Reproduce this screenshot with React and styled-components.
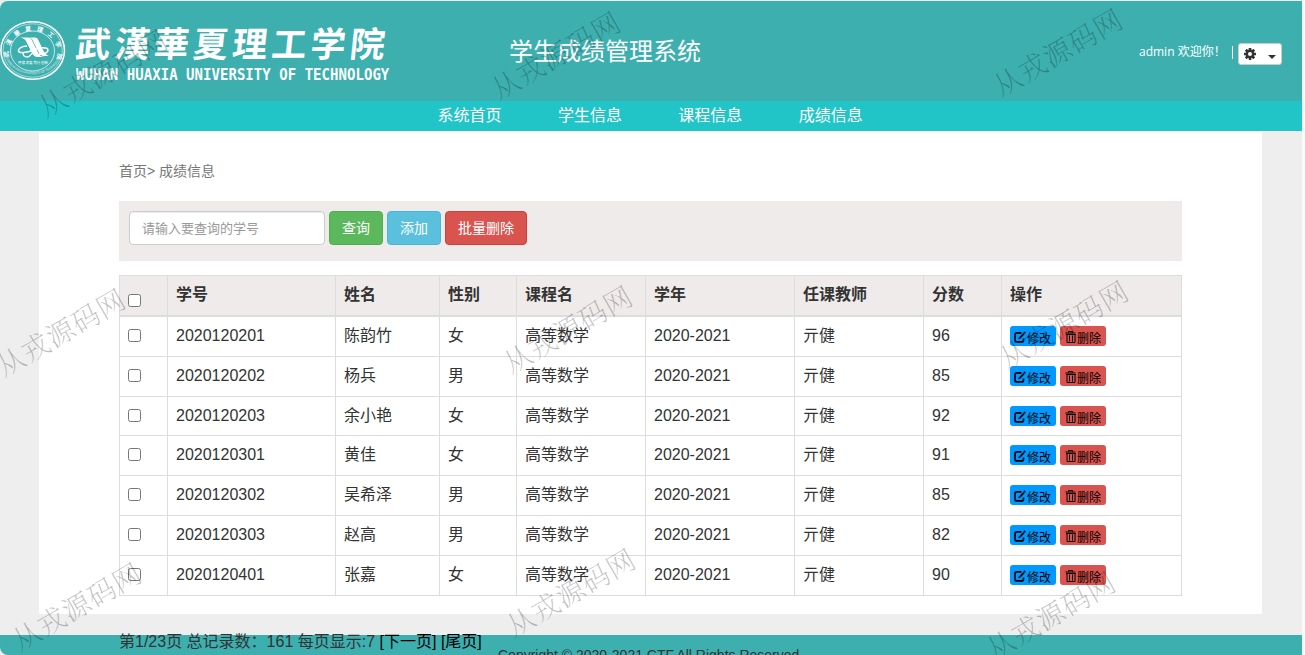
import React from "react";
import styled, { createGlobalStyle } from "styled-components";

const GlobalStyle = createGlobalStyle`
  * { box-sizing: border-box; }
  body {
    margin: 0;
    overflow: hidden;
    background: #fafafa;
    color: #333;
    font: 16px/22px "Liberation Sans", "Noto Sans CJK SC", sans-serif;
  }
`;

const Page = styled.div`
  position: relative;
  width: 1302px;
  height: 655px;
  padding-top: 1px;
  overflow: hidden;
  background: #eee;
`;

const Header = styled.header`
  display: grid;
  grid-template-columns: 509px 1fr auto;
  height: 100px;
  padding-right: 20px;
  border-top-left-radius: 8px;
  background: #3dafaf;
  color: #fff;
`;

const Brand = styled.div`
  display: flex;
  padding-top: 19px;
`;

const BrandNames = styled.div`
  display: flex;
  flex-direction: column;
  padding-left: 10px;
`;

const BrandName = styled.div`
  width: 315px;
  height: 50px;
  margin-top: -3px;
  font: 700 35px/50px "Noto Sans CJK SC", sans-serif;
  letter-spacing: 4.2px;
  white-space: nowrap;
  transform: skewX(-6deg);
`;

const BrandLatin = styled.div`
  font: 700 14px/16px "DejaVu Sans Mono", monospace;
  letter-spacing: 0.04px;
  white-space: nowrap;
  transform: scaleY(1.1);
`;

const Title = styled.h1`
  margin: 0;
  font: 400 24px/98px "Noto Sans CJK SC", sans-serif;
`;

const UserBox = styled.div`
  display: flex;
  align-items: center;
  height: 22px;
  margin-top: 42px;
  font: 12px/18px "Open Sans", "Noto Sans CJK SC", sans-serif;
`;

const Greeting = styled.span`
  width: 91px;
  padding-bottom: 4px;
  white-space: nowrap;
`;

const Divider = styled.span`
  width: 1px;
  height: 13px;
  margin: -4px 5px 0 2px;
  background: #fff;
`;

const SettingsButton = styled.button`
  display: flex;
  align-items: center;
  justify-content: space-between;
  width: 44px;
  height: 22px;
  padding: 0 5px;
  border: 1px solid #ccc;
  border-radius: 3px;
  background: #fff;
  color: #333;
`;

const Caret = styled.span`
  margin-top: 5px;
  border-top: 4px solid #333;
  border-left: 4px solid transparent;
  border-right: 4px solid transparent;
`;

const Nav = styled.nav`
  display: flex;
  gap: 56.4px;
  height: 30px;
  padding-left: 437.5px;
  background: #21c5c7;
  color: #fff;
  font: 16px/26px "Noto Sans CJK SC", sans-serif;
`;

const Main = styled.main`
  width: 1223px;
  height: 483px;
  margin-left: 39px;
  padding: 29px 80px 0;
  background: #fff;
`;

const Breadcrumb = styled.div`
  height: 41px;
  color: #777;
  font-size: 14px;
`;

const SearchBar = styled.div`
  display: flex;
  gap: 4px;
  height: 60px;
  margin-bottom: 14px;
  padding: 10px;
  background: #efebea;
`;

const SearchInput = styled.input`
  width: 196px;
  height: 34px;
  padding: 5px 12px 7px;
  border: 1px solid #ccc;
  border-radius: 4px;
  box-shadow: inset 0 1px 1px rgba(0, 0, 0, 0.075);
  font: 13px/20px "Noto Sans CJK SC", sans-serif;
  &::placeholder { color: #999; }
`;

const tones = {
  success: ["#5cb85c", "#4cae4c"],
  info: ["#5bc0de", "#46b8da"],
  danger: ["#d9534f", "#d43f3a"],
};

const Button = styled.button`
  height: 34px;
  padding: 0 12px 2px;
  border: 1px solid ${(p) => tones[p.$tone][1]};
  border-radius: 4px;
  background: ${(p) => tones[p.$tone][0]};
  color: #fff;
  font: 14px/20px "Noto Sans CJK SC", sans-serif;
`;

const Table = styled.table`
  width: 1063px;
  table-layout: fixed;
  border-collapse: separate;
  border-spacing: 0;
  border-top: 1px solid #ddd;
  border-left: 1px solid #ddd;
`;

const HeadCell = styled.th`
  height: 41px;
  padding: 8px 8px 0;
  border-right: 1px solid #ddd;
  border-bottom: 2px solid #ddd;
  background: #efebea;
  text-align: left;
  vertical-align: top;
  font-weight: 700;
`;

const Row = styled.tr`
  height: ${(p) => p.$height}px;
`;

const Cell = styled.td`
  padding: 8px 8px 0;
  border-right: 1px solid #ddd;
  border-bottom: 1px solid #ddd;
  vertical-align: top;
  line-height: 22px;
`;

const Check = styled.input`
  display: block;
  width: 13px;
  height: 13px;
  margin: ${(p) => (p.$head ? "10px 0 0" : "4px 0 0")};
`;

const Actions = styled.div`
  display: flex;
  gap: 4px;
  padding-top: 1px;
`;

const ActionButton = styled.button`
  display: flex;
  align-items: center;
  width: 46px;
  height: 20px;
  padding: 1px 0 0 4px;
  border: 0;
  border-radius: 3px;
  background: ${(p) => (p.$danger ? "#d9534f" : "#0099ff")};
  color: #000;
  font: 12px/18px "Noto Sans CJK SC", sans-serif;
  svg { flex: none; margin-right: 1px; }
`;

const ActionLabel = styled.span`
  padding-top: 2px;
  white-space: nowrap;
`;

const FooterBand = styled.footer`
  height: 20px;
  margin-top: 21px;
  border-bottom-left-radius: 8px;
  background: #3dafaf;
`;

const Pager = styled.div`
  height: 12px;
  padding-left: 119px;
  line-height: 14px;
  white-space: nowrap;
  a { color: #000; }
`;

const Copyright = styled.div`
  padding-left: 498px;
  font-size: 14px;
  line-height: 16px;
  white-space: nowrap;
`;

const Watermark = styled.div`
  position: absolute;
  left: ${(p) => p.$x}px;
  top: ${(p) => p.$y}px;
  color: rgba(0, 0, 0, 0.25);
  font: 200 28px/30px "Noto Serif CJK SC", "Noto Sans CJK SC", serif;
  letter-spacing: 0.8px;
  white-space: nowrap;
  transform: translate(-50%, -50%) rotate(-30deg);
  pointer-events: none;
`;

const Seal = () => (
  <svg width="66" height="61" viewBox="0 0 66 61" fill="none" stroke="#fff">
    <defs>
      <path id="sealTop" d="M9 37 A24.500 22 0 1 1 57 37" />
      <path id="sealBottom" d="M5.500 36 A27.500 21 0 0 0 60 36" />
    </defs>
    <ellipse cx="32.700" cy="30.500" rx="31.800" ry="28.800" strokeWidth="1.500" />
    <ellipse cx="32.700" cy="30.500" rx="29.600" ry="26.700" strokeWidth="0.500" />
    <ellipse cx="32.500" cy="31" rx="22" ry="20" strokeWidth="0.700" />
    <g fill="#fff" stroke="none" fontFamily="Noto Sans CJK SC, sans-serif">
      <text fontSize="6" fontWeight="700">
        <textPath href="#sealTop" textLength="84">武漢華夏理工学院</textPath>
      </text>
      <text fontSize="3.300" opacity="0.800">
        <textPath href="#sealBottom" textLength="70" lengthAdjust="spacingAndGlyphs">WUHAN HUAXIA UNIVERSITY OF TECHNOLOGY</textPath>
      </text>
      <text x="18" y="43.500" fontSize="3.600" textLength="30">厚德 求真 笃行 创新</text>
      <path d="M20 17.500h8q3 0 4 3l6.500 13q2 3.500 6.500 3.500h-7.500q-3.500 0-5.500-4l-6-12q-1.500-3-6-3.500z" />
      <path d="M30 17.500h5q2.500 0 3.500 3l5 10.500q1.500 3.500 5 5h-4.500q-3.500 0-5.500-4l-5-10q-1-3.500-3.500-4.500z" />
    </g>
    <path d="M27 26c-5 0-9 2.500-8.500 5s8 2 15-1 14.500-3 14.500 0-5 5-9 4" strokeWidth="1.400" />
    <path d="M23 33q0 4 4.500 4c3 0 4-4 8-7" strokeWidth="1.300" />
  </svg>
);

const CogIcon = () => (
  <svg width="12" height="12" viewBox="0 0 12 12">
    <g fill="#333">
      {[0, 45, 90, 135].map((a) => (
        <rect key={a} x="4.700" y="0" width="2.600" height="12" rx="0.400" transform={`rotate(${a} 6 6)`} />
      ))}
      <circle cx="6" cy="6" r="4.400" />
    </g>
    <circle cx="6" cy="6" r="2" fill="#fff" />
  </svg>
);

const EditIcon = () => (
  <svg width="12" height="12" viewBox="0 0 12 12" fill="none" stroke="#000">
    <path d="M7.500 1.900H3Q1 1.900 1 3.900V8.900Q1 10.900 3 10.900H7.500Q9.500 10.900 9.500 8.900V7.500" strokeWidth="1.700" />
    <path d="M5.800 6.800L10 2.600" strokeWidth="1.800" />
    <path d="M4.300 8.300l.6-2.200 1.600 1.600zM9.300 1.200l1-1 1.600 1.600-1 1z" fill="#000" stroke="none" />
  </svg>
);

const TrashIcon = () => (
  <svg width="12" height="14" viewBox="0 0 12 14" fill="none" stroke="#000">
    <path d="M4.500 2.500V1.500h4v1M1.500 3h10" />
    <path d="M3 4.500V12.500h8V4.500M2 4.500h10M5.500 5.500v6M8.500 5.500v6" />
  </svg>
);

const columns = [
  ["学号", 168],
  ["姓名", 104],
  ["性别", 77],
  ["课程名", 129],
  ["学年", 149],
  ["任课教师", 129],
  ["分数", 78],
  ["操作", 180],
];

const records = [
  ["2020120201", "陈韵竹", "女", 96, 40],
  ["2020120202", "杨兵", "男", 85, 40],
  ["2020120203", "余小艳", "女", 92, 39],
  ["2020120301", "黄佳", "女", 91, 40],
  ["2020120302", "吴希泽", "男", 85, 40],
  ["2020120303", "赵高", "男", 82, 40],
  ["2020120401", "张嘉", "女", 90, 40],
];

const marks = [
  [102, 72], [555, 54], [1057, 51],
  [60, 331], [567, 328], [1063, 323],
  [76, 605], [570, 591], [1050, 614],
];

export default function App() {
  return (
    <Page>
      <GlobalStyle />
      <Header>
        <Brand>
          <Seal />
          <BrandNames>
            <BrandName>武漢華夏理工学院</BrandName>
            <BrandLatin>WUHAN HUAXIA UNIVERSITY OF TECHNOLOGY</BrandLatin>
          </BrandNames>
        </Brand>
        <Title>学生成绩管理系统</Title>
        <UserBox>
          <Greeting>admin 欢迎你！</Greeting>
          <Divider />
          <SettingsButton aria-label="设置">
            <CogIcon />
            <Caret />
          </SettingsButton>
        </UserBox>
      </Header>
      <Nav>
        <span>系统首页</span>
        <span>学生信息</span>
        <span>课程信息</span>
        <span>成绩信息</span>
      </Nav>
      <Main>
        <Breadcrumb>首页&gt; 成绩信息</Breadcrumb>
        <SearchBar>
          <SearchInput placeholder="请输入要查询的学号" />
          <Button $tone="success">查询</Button>
          <Button $tone="info">添加</Button>
          <Button $tone="danger">批量删除</Button>
        </SearchBar>
        <Table>
          <colgroup>
            <col width="48" />
            {columns.map(([name, width]) => (
              <col key={name} width={width} />
            ))}
          </colgroup>
          <thead>
            <tr>
              <HeadCell><Check type="checkbox" $head /></HeadCell>
              {columns.map(([name]) => (
                <HeadCell key={name}>{name}</HeadCell>
              ))}
            </tr>
          </thead>
          <tbody>
            {records.map(([id, name, sex, score, height]) => (
              <Row key={id} $height={height}>
                <Cell><Check type="checkbox" /></Cell>
                <Cell>{id}</Cell>
                <Cell>{name}</Cell>
                <Cell>{sex}</Cell>
                <Cell>高等数学</Cell>
                <Cell>2020-2021</Cell>
                <Cell>亓健</Cell>
                <Cell>{score}</Cell>
                <Cell>
                  <Actions>
                    <ActionButton><EditIcon /><ActionLabel>修改</ActionLabel></ActionButton>
                    <ActionButton $danger><TrashIcon /><ActionLabel>删除</ActionLabel></ActionButton>
                  </Actions>
                </Cell>
              </Row>
            ))}
          </tbody>
        </Table>
      </Main>
      <FooterBand>
        <Pager>
          第1/23页 总记录数：161 每页显示:7 <a>[下一页]</a> <a>[尾页]</a>
        </Pager>
        <Copyright>Copyright © 2020-2021 CTF,All Rights Reserved</Copyright>
      </FooterBand>
      {marks.map(([x, y]) => (
        <Watermark key={`${x}-${y}`} $x={x} $y={y}>从戎源码网</Watermark>
      ))}
    </Page>
  );
}
